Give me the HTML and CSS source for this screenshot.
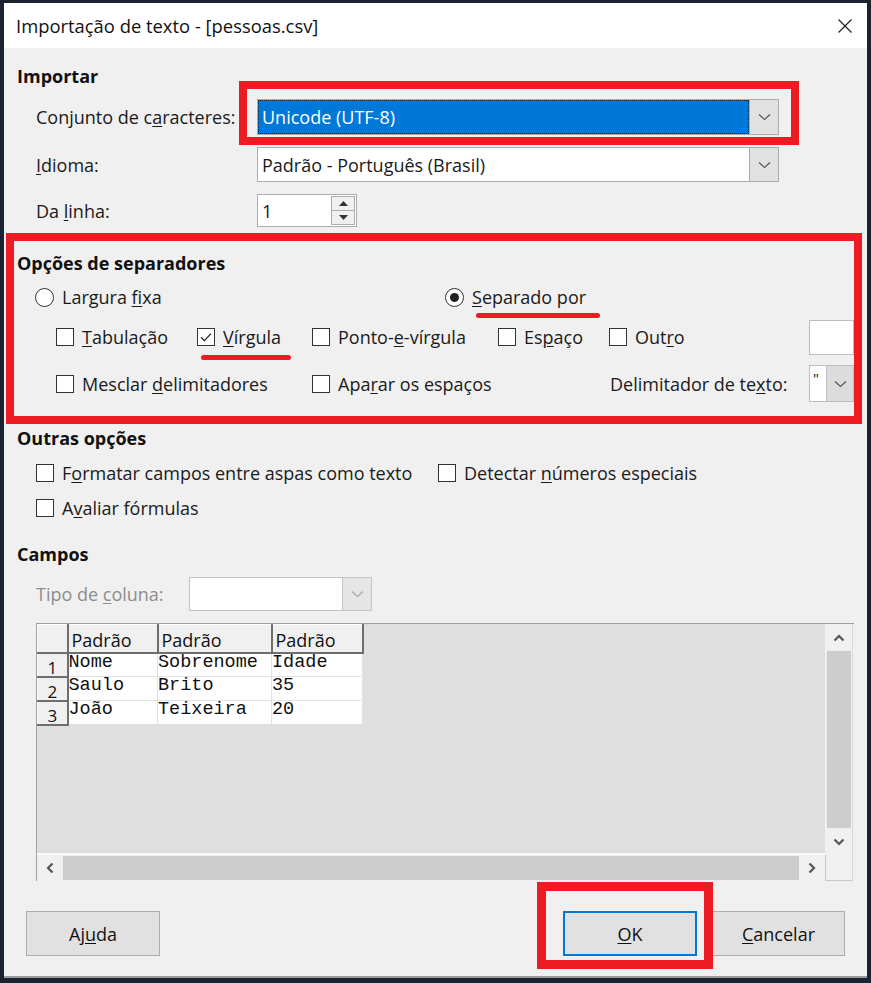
FILE: index.html
```html
<!DOCTYPE html>
<html lang="pt-BR">
<head>
<meta charset="utf-8">
<title>Importação de texto</title>
<link rel="stylesheet" href="styles.css">
</head>
<body>
<div class="dialog">
  <div class="titlebar">
    <span class="title">Importação de texto - [pessoas.csv]</span>
    <svg class="close" width="16" height="16" viewBox="0 0 16 16"><path d="M1.5 1.5L14.5 14.5M14.5 1.5L1.5 14.5" stroke="#1a1a1a" stroke-width="1.1" fill="none"/></svg>
  </div>
  <div class="content">
    <div class="heading h-import">Importar</div>

    <div class="form-row row-charset">
      <span class="lbl">Conjunto de c<u>a</u>racteres:</span>
      <div class="combo">
        <span class="combo-field field-selected"><span class="sel-text">Unicode (UTF-8)</span></span>
        <span class="combo-btn"><svg width="13" height="8" viewBox="0 0 13 8"><path d="M1 1.5L6.5 6.5L12 1.5" fill="none" stroke="#555" stroke-width="1.2"/></svg></span>
      </div>
    </div>

    <div class="form-row row-lang">
      <span class="lbl"><u>I</u>dioma:</span>
      <div class="combo">
        <span class="combo-field">Padrão - Português (Brasil)</span>
        <span class="combo-btn"><svg width="13" height="8" viewBox="0 0 13 8"><path d="M1 1.5L6.5 6.5L12 1.5" fill="none" stroke="#555" stroke-width="1.2"/></svg></span>
      </div>
    </div>

    <div class="form-row row-line">
      <span class="lbl">Da <u>l</u>inha:</span>
      <div class="spin">
        <span class="spin-field">1</span>
        <span class="spin-btns">
          <span class="spin-up"><svg width="9" height="5" viewBox="0 0 9 5"><path d="M0 5L4.5 0L9 5Z" fill="#333"/></svg></span>
          <span class="spin-down"><svg width="9" height="5" viewBox="0 0 9 5"><path d="M0 0L9 0L4.5 5Z" fill="#333"/></svg></span>
        </span>
      </div>
    </div>

    <div class="sep-box">
      <div class="heading">Opções de separadores</div>
      <div class="radio-row">
        <span class="opt opt-fixed"><span class="radio"></span><span>Largura <u>f</u>ixa</span></span>
        <span class="opt"><span class="radio on"></span><span><u>S</u>eparado por</span></span>
      </div>
      <div class="cb-grid cb-row1">
        <span class="opt"><span class="cb"></span><span><u>T</u>abulação</span></span>
        <span class="opt"><span class="cb"><svg width="14" height="14" viewBox="0 0 14 14"><path d="M2 7.2L5.4 10.6L12 3.6" fill="none" stroke="#222" stroke-width="1.3"/></svg></span><span><u>V</u>írgula</span></span>
        <span class="opt"><span class="cb"></span><span>Ponto-<u>e</u>-vírgula</span></span>
        <span class="opt"><span class="cb"></span><span>Es<u>p</u>aço</span></span>
        <span class="opt"><span class="cb"></span><span>Out<u>r</u>o</span></span>
        <span class="text-input"></span>
      </div>
      <div class="cb-grid cb-row2">
        <span class="opt span2"><span class="cb"></span><span>Mesclar <u>d</u>elimitadores</span></span>
        <span class="opt span2"><span class="cb"></span><span>Apa<u>r</u>ar os espaços</span></span>
        <span class="delim-lbl">Delimitador de te<u>x</u>to:</span>
        <span class="mini-combo"><span class="mini-field">"</span><span class="mini-btn"><svg width="13" height="8" viewBox="0 0 13 8"><path d="M1 1.5L6.5 6.5L12 1.5" fill="none" stroke="#555" stroke-width="1.2"/></svg></span></span>
      </div>
    </div>

    <div class="heading h-other">Outras opções</div>
    <div class="other-row first">
      <span class="opt opt-quote"><span class="cb"></span><span>F<u>o</u>rmatar campos entre aspas como texto</span></span>
      <span class="opt"><span class="cb"></span><span>Detectar <u>n</u>úmeros especiais</span></span>
    </div>
    <div class="other-row">
      <span class="opt"><span class="cb"></span><span>A<u>v</u>aliar fórmulas</span></span>
    </div>

    <div class="heading h-fields">Campos</div>
    <div class="type-row">
      <span class="lbl disabled">Tipo de <u>c</u>oluna:</span>
      <span class="combo combo-disabled">
        <span class="combo-field"></span>
        <span class="combo-btn"><svg width="13" height="8" viewBox="0 0 13 8"><path d="M1 1.5L6.5 6.5L12 1.5" fill="none" stroke="#a8a8a8" stroke-width="1.2"/></svg></span>
      </span>
    </div>

    <div class="preview">
      <div class="grid-area">
        <table class="data">
          <colgroup><col class="c0"><col class="c1"><col class="c2"><col class="c3"></colgroup>
          <tr class="hdr"><th class="corner"></th><th>Padrão</th><th>Padrão</th><th>Padrão</th></tr>
          <tr><th class="rn">1</th><td>Nome</td><td>Sobrenome</td><td>Idade</td></tr>
          <tr><th class="rn">2</th><td>Saulo</td><td>Brito</td><td>35</td></tr>
          <tr><th class="rn">3</th><td>João</td><td>Teixeira</td><td>20</td></tr>
        </table>
      </div>
      <div class="vscroll">
        <span class="arrow"><svg width="12" height="8" viewBox="0 0 12 8"><path d="M1.5 6.5L6 2L10.5 6.5" fill="none" stroke="#555" stroke-width="2.2"/></svg></span>
        <span class="vthumb"></span>
        <span class="arrow"><svg width="12" height="8" viewBox="0 0 12 8"><path d="M1.5 1.5L6 6L10.5 1.5" fill="none" stroke="#555" stroke-width="2.2"/></svg></span>
      </div>
      <div class="hscroll">
        <span class="harrow"><svg width="8" height="12" viewBox="0 0 8 12"><path d="M6.5 1.5L2 6L6.5 10.5" fill="none" stroke="#555" stroke-width="2.2"/></svg></span>
        <span class="hthumb"></span>
        <span class="harrow"><svg width="8" height="12" viewBox="0 0 8 12"><path d="M1.5 1.5L6 6L1.5 10.5" fill="none" stroke="#555" stroke-width="2.2"/></svg></span>
      </div>
      <div class="corner-cell"></div>
    </div>

    <div class="buttons">
      <span class="btn btn-help"><span>Aj<u>u</u>da</span></span>
      <span class="btn btn-ok"><span><u>O</u>K</span></span>
      <span class="btn btn-cancel"><span><u>C</u>ancelar</span></span>
    </div>

    <span class="mark box-charset"></span>
    <span class="mark box-ok"></span>
    <span class="mark line-sep"></span>
    <span class="mark line-comma"></span>
  </div>
</div>
</body>
</html>
```
FILE: styles.css
```css
* { box-sizing: border-box; }
html, body { margin: 0; padding: 0; }
body {
  background: #1c2230;
  width: 871px;
  height: 983px;
  padding: 3px 4px 0 4px;
  font-family: "Open Sans", "Noto Sans", sans-serif;
  font-size: 18px;
  color: #1a1a1a;
  overflow: hidden;
}
u { text-decoration-thickness: 1px; text-underline-offset: 2px; }

.dialog {
  width: 863px;
  height: 975px;
  display: flex;
  flex-direction: column;
  background: #f0f0f0;
  border-bottom: 2px solid #9a9a9a;
}
.titlebar {
  flex: none;
  height: 45px;
  background: #fff;
  display: flex;
  align-items: center;
  justify-content: space-between;
  padding: 0 14px 0 12px;
}
.title { font-size: 18.4px; color: #111; }
.content { position: relative; flex: 1; }

.heading { font-weight: bold; height: 20px; line-height: 20px; padding-left: 13px; color: #111; white-space: nowrap; }
.h-import { margin-top: 16px; height: 24px; line-height: 24px; }

.form-row {
  display: grid;
  grid-template-columns: 221px auto;
  align-items: center;
  padding-left: 32px;
}
.lbl { white-space: nowrap; }
.row-charset { margin-top: 11px; height: 36px; }
.row-lang { margin-top: 12px; height: 35px; }
.row-line { margin-top: 12px; height: 33px; }

.combo {
  display: flex;
  height: 100%;
  width: 522px;
  border: 1px solid #adadad;
  background: #fff;
}
.combo-field { flex: 1; display: flex; align-items: center; padding-left: 4px; white-space: nowrap; }
.combo-btn {
  flex: none;
  width: 29px;
  background: #e1e1e1;
  border-left: 1px solid #adadad;
  display: flex;
  align-items: center;
  justify-content: center;
}
.field-selected { padding: 0; }
.sel-text {
  display: flex;
  align-items: center;
  width: 100%;
  height: 100%;
  background: #0078d7;
  color: #fff;
  padding-left: 3px;
  border: 1px dotted #222;
}

.spin {
  display: flex;
  width: 100px;
  height: 100%;
  background: #fff;
  border: 1px solid #adadad;
}
.spin-field { flex: 1; display: flex; align-items: center; padding-left: 4px; }
.spin-btns { width: 25px; display: flex; flex-direction: column; padding: 1px 1px 1px 0; }
.spin-up, .spin-down {
  flex: 1;
  background: #f0f0f0;
  border: 1px solid #adadad;
  display: flex;
  align-items: center;
  justify-content: center;
}
.spin-down { border-top: none; }

.sep-box {
  margin: 6px 0 0 2px;
  width: 856px;
  height: 191px;
  border: 8px solid #ed1c24;
}
.sep-box .heading { margin-top: 12px; padding-left: 3px; }
.radio-row {
  margin-top: 14px;
  height: 20px;
  display: flex;
  align-items: center;
  padding-left: 21px;
}
.opt { display: flex; align-items: center; gap: 8px; white-space: nowrap; }
.opt-fixed { width: 410px; }
.radio {
  width: 19px;
  height: 19px;
  border-radius: 50%;
  border: 1px solid #333;
  background: #fff;
  display: flex;
  align-items: center;
  justify-content: center;
  flex: none;
}
.radio.on::after {
  content: "";
  width: 9px;
  height: 9px;
  border-radius: 50%;
  background: #222;
}
.cb {
  width: 18px;
  height: 18px;
  border: 1px solid #333;
  background: #fff;
  flex: none;
  display: flex;
  align-items: center;
  justify-content: center;
}
.cb-grid {
  display: grid;
  grid-template-columns: 141px 115px 186px 111px 200px 45px;
  align-items: center;
  padding-left: 42px;
}
.cb-row1 { margin-top: 12px; height: 36px; }
.cb-row2 { margin-top: 10px; height: 37px; }
.span2 { grid-column: span 2; }
.text-input { height: 35px; width: 45px; background: #fff; border: 1px solid #bdbdbd; }
.delim-lbl { padding-left: 1px; white-space: nowrap; }
.mini-combo { display: flex; height: 37px; width: 45px; border: 1px solid #bdbdbd; background: #fff; }
.mini-field { width: 16px; padding-left: 3px; font-size: 15px; line-height: 24px; }
.mini-btn { flex: 1; background: #dcdcdc; border-left: 1px solid #bdbdbd; display: flex; align-items: center; justify-content: center; }

.h-other { margin-top: 4px; }
.other-row { display: flex; align-items: center; padding-left: 32px; height: 20px; margin-top: 15px; }
.opt-quote { width: 402px; }
.h-fields { margin-top: 26px; }

.type-row {
  margin-top: 13px;
  height: 34px;
  display: grid;
  grid-template-columns: 153px 183px;
  align-items: center;
  padding-left: 32px;
}
.disabled { color: #8d8d8d; }
.combo-disabled { width: 183px; border-color: #c4c4c4; }
.combo-disabled .combo-btn { background: #e6e6e6; border-left-color: #c4c4c4; }

.preview {
  margin: 12px 0 0 32px;
  width: 818px;
  height: 258px;
  display: grid;
  grid-template-columns: 788px 28px;
  grid-template-rows: 231px 26px;
  border-left: 1px solid #a0a0a0;
  border-top: 1px solid #a0a0a0;
}
.grid-area { background: #dfdfdf; overflow: hidden; border-bottom: 2px solid #fafafa; }
.data { border-collapse: collapse; table-layout: fixed; }
.c0 { width: 30px; }
.c1 { width: 90px; }
.c2 { width: 114px; }
.c3 { width: 91px; }
.data th {
  background: #f0f0f0;
  font-weight: normal;
  text-align: left;
  padding: 0 0 0 3px;
  border-right: 2px solid #6e6e6e;
  border-bottom: 2px solid #6e6e6e;
  border-left: 1px solid #fff;
  border-top: 1px solid #fff;
  color: #111;
  white-space: nowrap;
}
.hdr th { height: 28px; vertical-align: bottom; line-height: 24px; }
.data th.rn {
  text-align: center;
  vertical-align: bottom;
  font-size: 17px;
  line-height: 17px;
  height: 24px;
  padding: 0;
}
.data td {
  background: #fff;
  height: 24px;
  padding: 0;
  border: 1px solid #e2e2e2;
  font-family: "Liberation Mono", "DejaVu Sans Mono", monospace;
  font-size: 18.5px;
  line-height: 18px;
  vertical-align: top;
  color: #111;
  white-space: nowrap;
}

.vscroll {
  grid-row: 1;
  grid-column: 2;
  background: #f0f0f0;
  display: flex;
  flex-direction: column;
  align-items: center;
  border-right: 1px solid #dadada;
}
.arrow { height: 27px; width: 100%; display: flex; align-items: center; justify-content: center; flex: none; }
.vthumb { flex: 1; width: 24px; background: #cdcdcd; }
.hscroll {
  grid-row: 2;
  grid-column: 1;
  background: #f0f0f0;
  display: flex;
  align-items: center;
}
.harrow { width: 26px; height: 100%; display: flex; align-items: center; justify-content: center; flex: none; }
.hthumb { flex: 1; height: 24px; background: #cdcdcd; }
.corner-cell {
  grid-row: 2;
  grid-column: 2;
  background: #f0f0f0;
  border-left: 1px solid #c8c8c8;
  border-bottom: 1px solid #c8c8c8;
  border-right: 1px solid #dadada;
}

.buttons { margin-top: 30px; height: 45px; display: flex; padding-left: 22px; }
.btn {
  width: 134px;
  height: 45px;
  background: #e1e1e1;
  border: 1px solid #adadad;
  display: flex;
  align-items: center;
  justify-content: center;
  color: #111;
}
.btn-help { margin-right: 403px; }
.btn-ok { border: 2px solid #0078d7; }
.btn-cancel { margin-left: 15px; width: 133px; }

.mark { position: absolute; }
.box-charset { left: 235px; top: 33px; width: 560px; height: 64px; border: 8px solid #ed1c24; }
.box-ok { left: 533px; top: 834px; width: 176px; height: 87px; border: 9px solid #ed1c24; }
.line-sep { left: 472px; top: 265px; width: 124px; height: 5px; border-radius: 3px; background: #ed1c24; }
.line-comma { left: 197px; top: 307px; width: 90px; height: 5px; border-radius: 3px; background: #ed1c24; }
```
